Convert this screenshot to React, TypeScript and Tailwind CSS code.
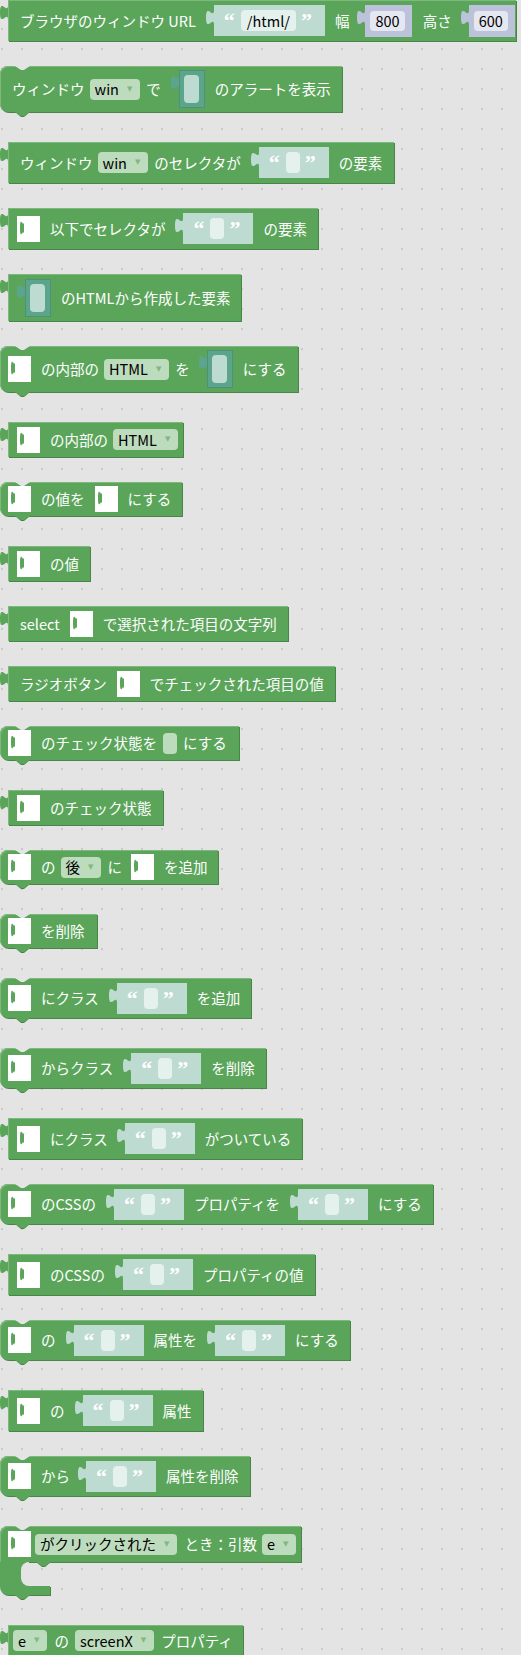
import type { ReactNode } from 'react';

type Props = { className?: string; children?: ReactNode };

// puzzle tab on the left edge of a value block (Geras shape)
function Tab({ fill }: { fill: string }) {
  return (
    <svg width="8" height="26" viewBox="0 0 8 26" className="block shrink-0 overflow-visible">
      <path d="M8,20 c0,-10 -8,8 -8,-7.5 s8,2.5 8,-7.5 Z" fill={fill} />
    </svg>
  );
}

// empty value socket: white cut-out with the socket tab showing inside
function Hole({ className = '' }: { className?: string }) {
  return (
    <svg width="23" height="26" viewBox="0 0 23 26" className={`block shrink-0 ${className}`}>
      <rect x="0" y="0" width="23" height="26" fill="#ffffff" />
      <path d="M7,19 c0,-9 -4,7.5 -4,-7 s4,2 4,-7 Z" fill="#5ba55b" />
    </svg>
  );
}

function TopDent() {
  return (
    <svg width="15" height="4" viewBox="0 0 15 4" className="absolute left-[15px] top-0 block">
      <path d="M0,0 l6,4 h3 l6,-4 Z" fill="#e4e4e4" />
    </svg>
  );
}

function BottomNotch({ className = '' }: { className?: string }) {
  return (
    <svg width="15" height="5" viewBox="0 0 15 5" className={`block shrink-0 ${className}`}>
      <path d="M0,0 l6,5 h3 l6,-5 Z" fill="#498449" />
      <path d="M0,0 l6,4 h3 l6,-4 Z" fill="#5ba55b" />
    </svg>
  );
}

function Label({ className = '', children }: Props) {
  return <span className={`shrink-0 whitespace-nowrap leading-[20px] text-white ${className}`}>{children}</span>;
}

function Dropdown({ label, className = '' }: { label: string; className?: string }) {
  return (
    <span className={`flex h-[21px] shrink-0 items-center rounded-[4px] bg-[#bddbbd] pl-[5px] pr-[8px] text-black ${className}`}>
      <span className="whitespace-nowrap leading-[20px]">{label}</span>
      <span className="ml-[8px] font-['DejaVu_Sans',sans-serif] text-[7px] leading-none text-[#80b880]">▼</span>
    </span>
  );
}

function Quote({ className = '', children }: Props) {
  return (
    <span className={`h-[21px] w-[11px] shrink-0 font-['Liberation_Serif',serif] text-[22px] font-bold leading-[21px] text-white ${className}`}>
      {children}
    </span>
  );
}

function StringInput({ value, className = '' }: { value?: string; className?: string }) {
  return (
    <div className={`flex shrink-0 items-start ${className}`}>
      <Tab fill="#bddbd1" />
      <div className="flex h-[31px] items-center bg-[#bddbd1] pl-[10px] pr-[13px]">
        <Quote>“</Quote>
        {value ? (
          <span className="ml-[6px] flex h-[21px] items-center rounded-[4px] bg-[#e5f1ed] px-[6px] leading-[20px] text-black">{value}</span>
        ) : (
          <span className="ml-[6px] h-[21px] w-[14px] rounded-[4px] bg-[#e5f1ed]" />
        )}
        <Quote className="ml-[5px]">”</Quote>
      </div>
    </div>
  );
}

function NumberInput({ value, className = '' }: { value: string; className?: string }) {
  return (
    <div className={`flex shrink-0 items-start ${className}`}>
      <Tab fill="#bdc2db" />
      <div className="flex h-[32px] items-center bg-[#bdc2db] pl-[5px] pr-[7px]">
        <span className="flex h-[20px] items-center rounded-[4px] bg-[#e5e7f1] px-[5px] leading-[20px] text-black">{value}</span>
      </div>
    </div>
  );
}

function HtmlInput({ className = '' }: { className?: string }) {
  return (
    <div className={`flex shrink-0 items-start ${className}`}>
      <Tab fill="#5ba58c" />
      <div className="flex h-[38px] w-[26px] items-center border border-[#4e9079] bg-[#5ba58c] pl-[4px]">
        <span className="h-[28px] w-[15px] rounded-[4px] bg-[#bddbd1]" />
      </div>
    </div>
  );
}

function ValueBlock({ className = '', children }: Props) {
  return (
    <div className="flex w-fit items-start">
      <Tab fill="#5ba55b" />
      <div className={`flex items-center bg-[#5ba55b] shadow-[inset_1px_1px_0_#7db87d,1px_1px_0_#498449] ${className}`}>
        {children}
      </div>
    </div>
  );
}

function StatementBlock({ className = '', children }: Props) {
  return (
    <div className="relative w-fit">
      <div className={`flex items-center rounded-l-[8px] bg-[#5ba55b] shadow-[inset_1px_1px_0_#7db87d,1px_1px_0_#498449] ${className}`}>
        {children}
      </div>
      <BottomNotch className="ml-[15px]" />
      <TopDent />
    </div>
  );
}

export default function App() {
  return (
    <div className="min-h-[1655px] w-full bg-[#e4e4e4] font-['Noto_Sans_CJK_JP','Noto_Sans',sans-serif] text-[14.5px] [background-image:radial-gradient(circle,#c9c9c9_0.8px,transparent_1.2px)] [background-position:-8px_-1px] [background-size:20px_20px]">
      <div className="flex flex-col gap-[25px]">
        <ValueBlock className="h-[41px] pl-[12px] pr-[1px]">
          <Label>ブラウザのウィンドウ URL</Label>
          <StringInput value="/html/" className="ml-[10px]" />
          <Label className="ml-[10px]">幅</Label>
          <NumberInput value="800" className="ml-[8px]" />
          <Label className="ml-[11px]">高さ</Label>
          <NumberInput value="600" className="ml-[9px]" />
        </ValueBlock>

        <StatementBlock className="h-[46px] pl-[12px] pr-[11px]">
          <Label>ウィンドウ</Label>
          <Dropdown label="win" className="ml-[5px]" />
          <Label className="ml-[6px]">で</Label>
          <HtmlInput className="ml-[10px]" />
          <Label className="ml-[10px]">のアラートを表示</Label>
        </StatementBlock>

        <ValueBlock className="h-[41px] pl-[12px] pr-[12px]">
          <Label>ウィンドウ</Label>
          <Dropdown label="win" className="ml-[5px]" />
          <Label className="ml-[6px]">のセレクタが</Label>
          <StringInput className="ml-[10px]" />
          <Label className="ml-[10px]">の要素</Label>
        </ValueBlock>

        <ValueBlock className="h-[41px] pl-[9px] pr-[11px]">
          <Hole />
          <Label className="ml-[10px]">以下でセレクタが</Label>
          <StringInput className="ml-[10px]" />
          <Label className="ml-[10px]">の要素</Label>
        </ValueBlock>

        <ValueBlock className="h-[47px] pl-[9px] pr-[11px]">
          <HtmlInput />
          <Label className="ml-[10px]">のHTMLから作成した要素</Label>
        </ValueBlock>

        <StatementBlock className="h-[46px] pl-[8px] pr-[12px]">
          <Hole />
          <Label className="ml-[10px]">の内部の</Label>
          <Dropdown label="HTML" className="ml-[5px]" />
          <Label className="ml-[6px]">を</Label>
          <HtmlInput className="ml-[9px]" />
          <Label className="ml-[10px]">にする</Label>
        </StatementBlock>

        <ValueBlock className="h-[35px] pl-[9px] pr-[5px]">
          <Hole />
          <Label className="ml-[10px]">の内部の</Label>
          <Dropdown label="HTML" className="ml-[5px]" />
        </ValueBlock>

        <StatementBlock className="h-[34px] pl-[8px] pr-[11px]">
          <Hole />
          <Label className="ml-[10px]">の値を</Label>
          <Hole className="ml-[10px]" />
          <Label className="ml-[10px]">にする</Label>
        </StatementBlock>

        <ValueBlock className="h-[35px] pl-[9px] pr-[11px]">
          <Hole />
          <Label className="ml-[10px]">の値</Label>
        </ValueBlock>

        <ValueBlock className="h-[35px] pl-[12px] pr-[11px]">
          <Label>select</Label>
          <Hole className="ml-[10px]" />
          <Label className="ml-[10px]">で選択された項目の文字列</Label>
        </ValueBlock>

        <ValueBlock className="h-[35px] pl-[12px] pr-[11px]">
          <Label>ラジオボタン</Label>
          <Hole className="ml-[10px]" />
          <Label className="ml-[10px]">でチェックされた項目の値</Label>
        </ValueBlock>

        <StatementBlock className="h-[34px] pl-[8px] pr-[12px]">
          <Hole />
          <Label className="ml-[10px]">のチェック状態を</Label>
          <span className="ml-[6px] h-[21px] w-[14px] shrink-0 rounded-[4px] bg-[#bddbbd]" />
          <Label className="ml-[6px]">にする</Label>
        </StatementBlock>

        <ValueBlock className="h-[35px] pl-[9px] pr-[11px]">
          <Hole />
          <Label className="ml-[10px]">のチェック状態</Label>
        </ValueBlock>

        <StatementBlock className="h-[34px] pl-[8px] pr-[11px]">
          <Hole />
          <Label className="ml-[10px]">の</Label>
          <Dropdown label="後" className="ml-[5px]" />
          <Label className="ml-[6px]">に</Label>
          <Hole className="ml-[9px]" />
          <Label className="ml-[10px]">を追加</Label>
        </StatementBlock>

        <StatementBlock className="h-[34px] pl-[8px] pr-[12px]">
          <Hole />
          <Label className="ml-[10px]">を削除</Label>
        </StatementBlock>

        <StatementBlock className="h-[40px] pl-[8px] pr-[11px]">
          <Hole />
          <Label className="ml-[10px]">にクラス</Label>
          <StringInput className="ml-[10px]" />
          <Label className="ml-[10px]">を追加</Label>
        </StatementBlock>

        <StatementBlock className="h-[40px] pl-[8px] pr-[11px]">
          <Hole />
          <Label className="ml-[10px]">からクラス</Label>
          <StringInput className="ml-[10px]" />
          <Label className="ml-[10px]">を削除</Label>
        </StatementBlock>

        <ValueBlock className="h-[41px] pl-[9px] pr-[11px]">
          <Hole />
          <Label className="ml-[10px]">にクラス</Label>
          <StringInput className="ml-[9px]" />
          <Label className="ml-[10px]">がついている</Label>
        </ValueBlock>

        <StatementBlock className="h-[40px] pl-[8px] pr-[11px]">
          <Hole />
          <Label className="ml-[10px]">のCSSの</Label>
          <StringInput className="ml-[10px]" />
          <Label className="ml-[10px]">プロパティを</Label>
          <StringInput className="ml-[10px]" />
          <Label className="ml-[10px]">にする</Label>
        </StatementBlock>

        <ValueBlock className="h-[41px] pl-[9px] pr-[11px]">
          <Hole />
          <Label className="ml-[10px]">のCSSの</Label>
          <StringInput className="ml-[10px]" />
          <Label className="ml-[10px]">プロパティの値</Label>
        </ValueBlock>

        <StatementBlock className="h-[40px] pl-[8px] pr-[11px]">
          <Hole />
          <Label className="ml-[10px]">の</Label>
          <StringInput className="ml-[10px]" />
          <Label className="ml-[10px]">属性を</Label>
          <StringInput className="ml-[10px]" />
          <Label className="ml-[10px]">にする</Label>
        </StatementBlock>

        <ValueBlock className="h-[41px] pl-[9px] pr-[11px]">
          <Hole />
          <Label className="ml-[10px]">の</Label>
          <StringInput className="ml-[10px]" />
          <Label className="ml-[10px]">属性</Label>
        </ValueBlock>

        <StatementBlock className="h-[40px] pl-[8px] pr-[11px]">
          <Hole />
          <Label className="ml-[10px]">から</Label>
          <StringInput className="ml-[8px]" />
          <Label className="ml-[10px]">属性を削除</Label>
        </StatementBlock>

        {/* event block with statement mouth */}
        <div className="relative w-fit">
          <div className="flex h-[36px] items-center rounded-tl-[8px] bg-[#5ba55b] pl-[8px] pr-[5px] shadow-[inset_1px_1px_0_#7db87d,1px_1px_0_#498449]">
            <Hole />
            <Dropdown label="がクリックされた" className="ml-[4px]" />
            <Label className="ml-[7px]">とき：引数</Label>
            <Dropdown label="e" className="ml-[5px]" />
          </div>
          <div className="flex h-[24px] items-start">
            <div className="h-full w-[21px] bg-[#5ba55b]" />
            <div className="h-full w-[8px] bg-[#5ba55b]">
              <div className="h-full w-full rounded-l-[8px] bg-[#e4e4e4]" />
            </div>
            <BottomNotch className="ml-[7px]" />
          </div>
          <div className="h-[9px] w-[50px] rounded-bl-[8px] bg-[#5ba55b] shadow-[1px_1px_0_#498449]" />
          <BottomNotch className="ml-[15px]" />
          <TopDent />
        </div>

        <ValueBlock className="h-[31px] pl-[5px] pr-[10px]">
          <Dropdown label="e" />
          <Label className="ml-[7px]">の</Label>
          <Dropdown label="screenX" className="ml-[6px]" />
          <Label className="ml-[7px]">プロパティ</Label>
        </ValueBlock>
      </div>
    </div>
  );
}
